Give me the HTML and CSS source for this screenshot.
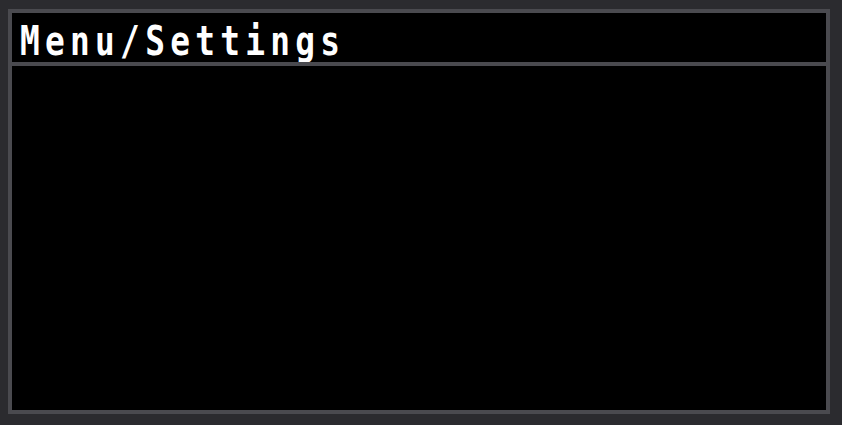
FILE: index.html
```html
<!DOCTYPE html>
<html>
<head>
<meta charset="utf-8">
<link rel="stylesheet" href="styles.css">
</head>
<body>
<div class="panel">
  <div class="header"><span class="title">Menu/Settings</span></div>
  <div class="content"></div>
</div>
</body>
</html>
```
FILE: styles.css
```css
html, body {
  margin: 0;
  padding: 0;
  background: #2b2b2f;
}
body {
  width: 842px;
  height: 425px;
  box-sizing: border-box;
  padding: 9px 12px 11px 8px;
}
.panel {
  width: 822px;
  height: 405px;
  box-sizing: border-box;
  border: 4px solid #4a4a4f;
  background: #000;
  display: flex;
  flex-direction: column;
}
.header {
  height: 49px;
  border-bottom: 4px solid #4a4a4f;
  display: flex;
  align-items: center;
  padding-left: 8px;
  overflow: hidden;
}
.title {
  font-family: "DejaVu Sans Mono", "Liberation Mono", monospace;
  font-size: 41px;
  font-weight: bold;
  letter-spacing: 6.6px;
  color: #fff;
  line-height: 1;
  display: inline-block;
  white-space: nowrap;
  transform-origin: left center;
  transform: translateY(4px) scaleX(0.8);
}
.content {
  flex: 1;
}
```
